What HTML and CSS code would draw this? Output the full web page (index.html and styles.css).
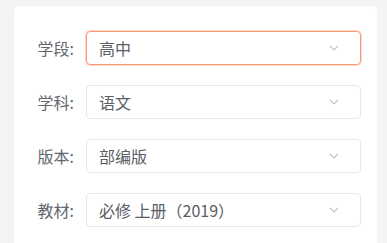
FILE: index.html
```html
<!DOCTYPE html>
<html lang="zh-CN">
<head>
<meta charset="utf-8">
<link rel="stylesheet" href="styles.css">
</head>
<body>
<div class="card">
  <div class="row">
    <label class="label">学段:</label>
    <div class="select focus"><span class="value">高中</span><svg class="arrow" viewBox="0 0 10 6" width="10" height="6"><path d="M1 1 L5 5 L9 1" fill="none" stroke="#c0c4cc" stroke-width="1.1"/></svg></div>
  </div>
  <div class="row">
    <label class="label">学科:</label>
    <div class="select"><span class="value">语文</span><svg class="arrow" viewBox="0 0 10 6" width="10" height="6"><path d="M1 1 L5 5 L9 1" fill="none" stroke="#c0c4cc" stroke-width="1.1"/></svg></div>
  </div>
  <div class="row">
    <label class="label">版本:</label>
    <div class="select"><span class="value">部编版</span><svg class="arrow" viewBox="0 0 10 6" width="10" height="6"><path d="M1 1 L5 5 L9 1" fill="none" stroke="#c0c4cc" stroke-width="1.1"/></svg></div>
  </div>
  <div class="row">
    <label class="label">教材:</label>
    <div class="select"><span class="value">必修 上册（2019）</span><svg class="arrow" viewBox="0 0 10 6" width="10" height="6"><path d="M1 1 L5 5 L9 1" fill="none" stroke="#c0c4cc" stroke-width="1.1"/></svg></div>
  </div>
</div>
</body>
</html>
```
FILE: styles.css
```css
html, body {
  margin: 0;
  height: 100%;
}
body {
  background: #f4f4f4;
  padding: 6px 10px 0 14px;
  box-sizing: border-box;
  font-family: "Noto Sans CJK SC", "Noto Sans", sans-serif;
  overflow: hidden;
}
.card {
  background: #fff;
  border-radius: 5px 5px 0 0;
  width: 363px;
  padding-top: 25px;
  height: 237px;
  box-sizing: border-box;
}
.row {
  display: flex;
  align-items: center;
  margin-bottom: 20px;
}
.row:last-child {
  margin-bottom: 0;
}
.label {
  width: 72px;
  padding-right: 12px;
  box-sizing: border-box;
  text-align: right;
  font-size: 16px;
  color: #62666d;
}
.select {
  width: 275px;
  height: 34px;
  box-sizing: border-box;
  border: 1px solid #e4e7ed;
  border-radius: 4px;
  display: flex;
  align-items: center;
  padding: 0 21px 0 12px;
}
.select.focus {
  border-color: #f79a74;
  box-shadow: 0 0 0 1px #fcd9c9;
}
.value {
  flex: 1;
  font-size: 16px;
  color: #5a5e66;
}
.arrow {
  display: block;
}
```
